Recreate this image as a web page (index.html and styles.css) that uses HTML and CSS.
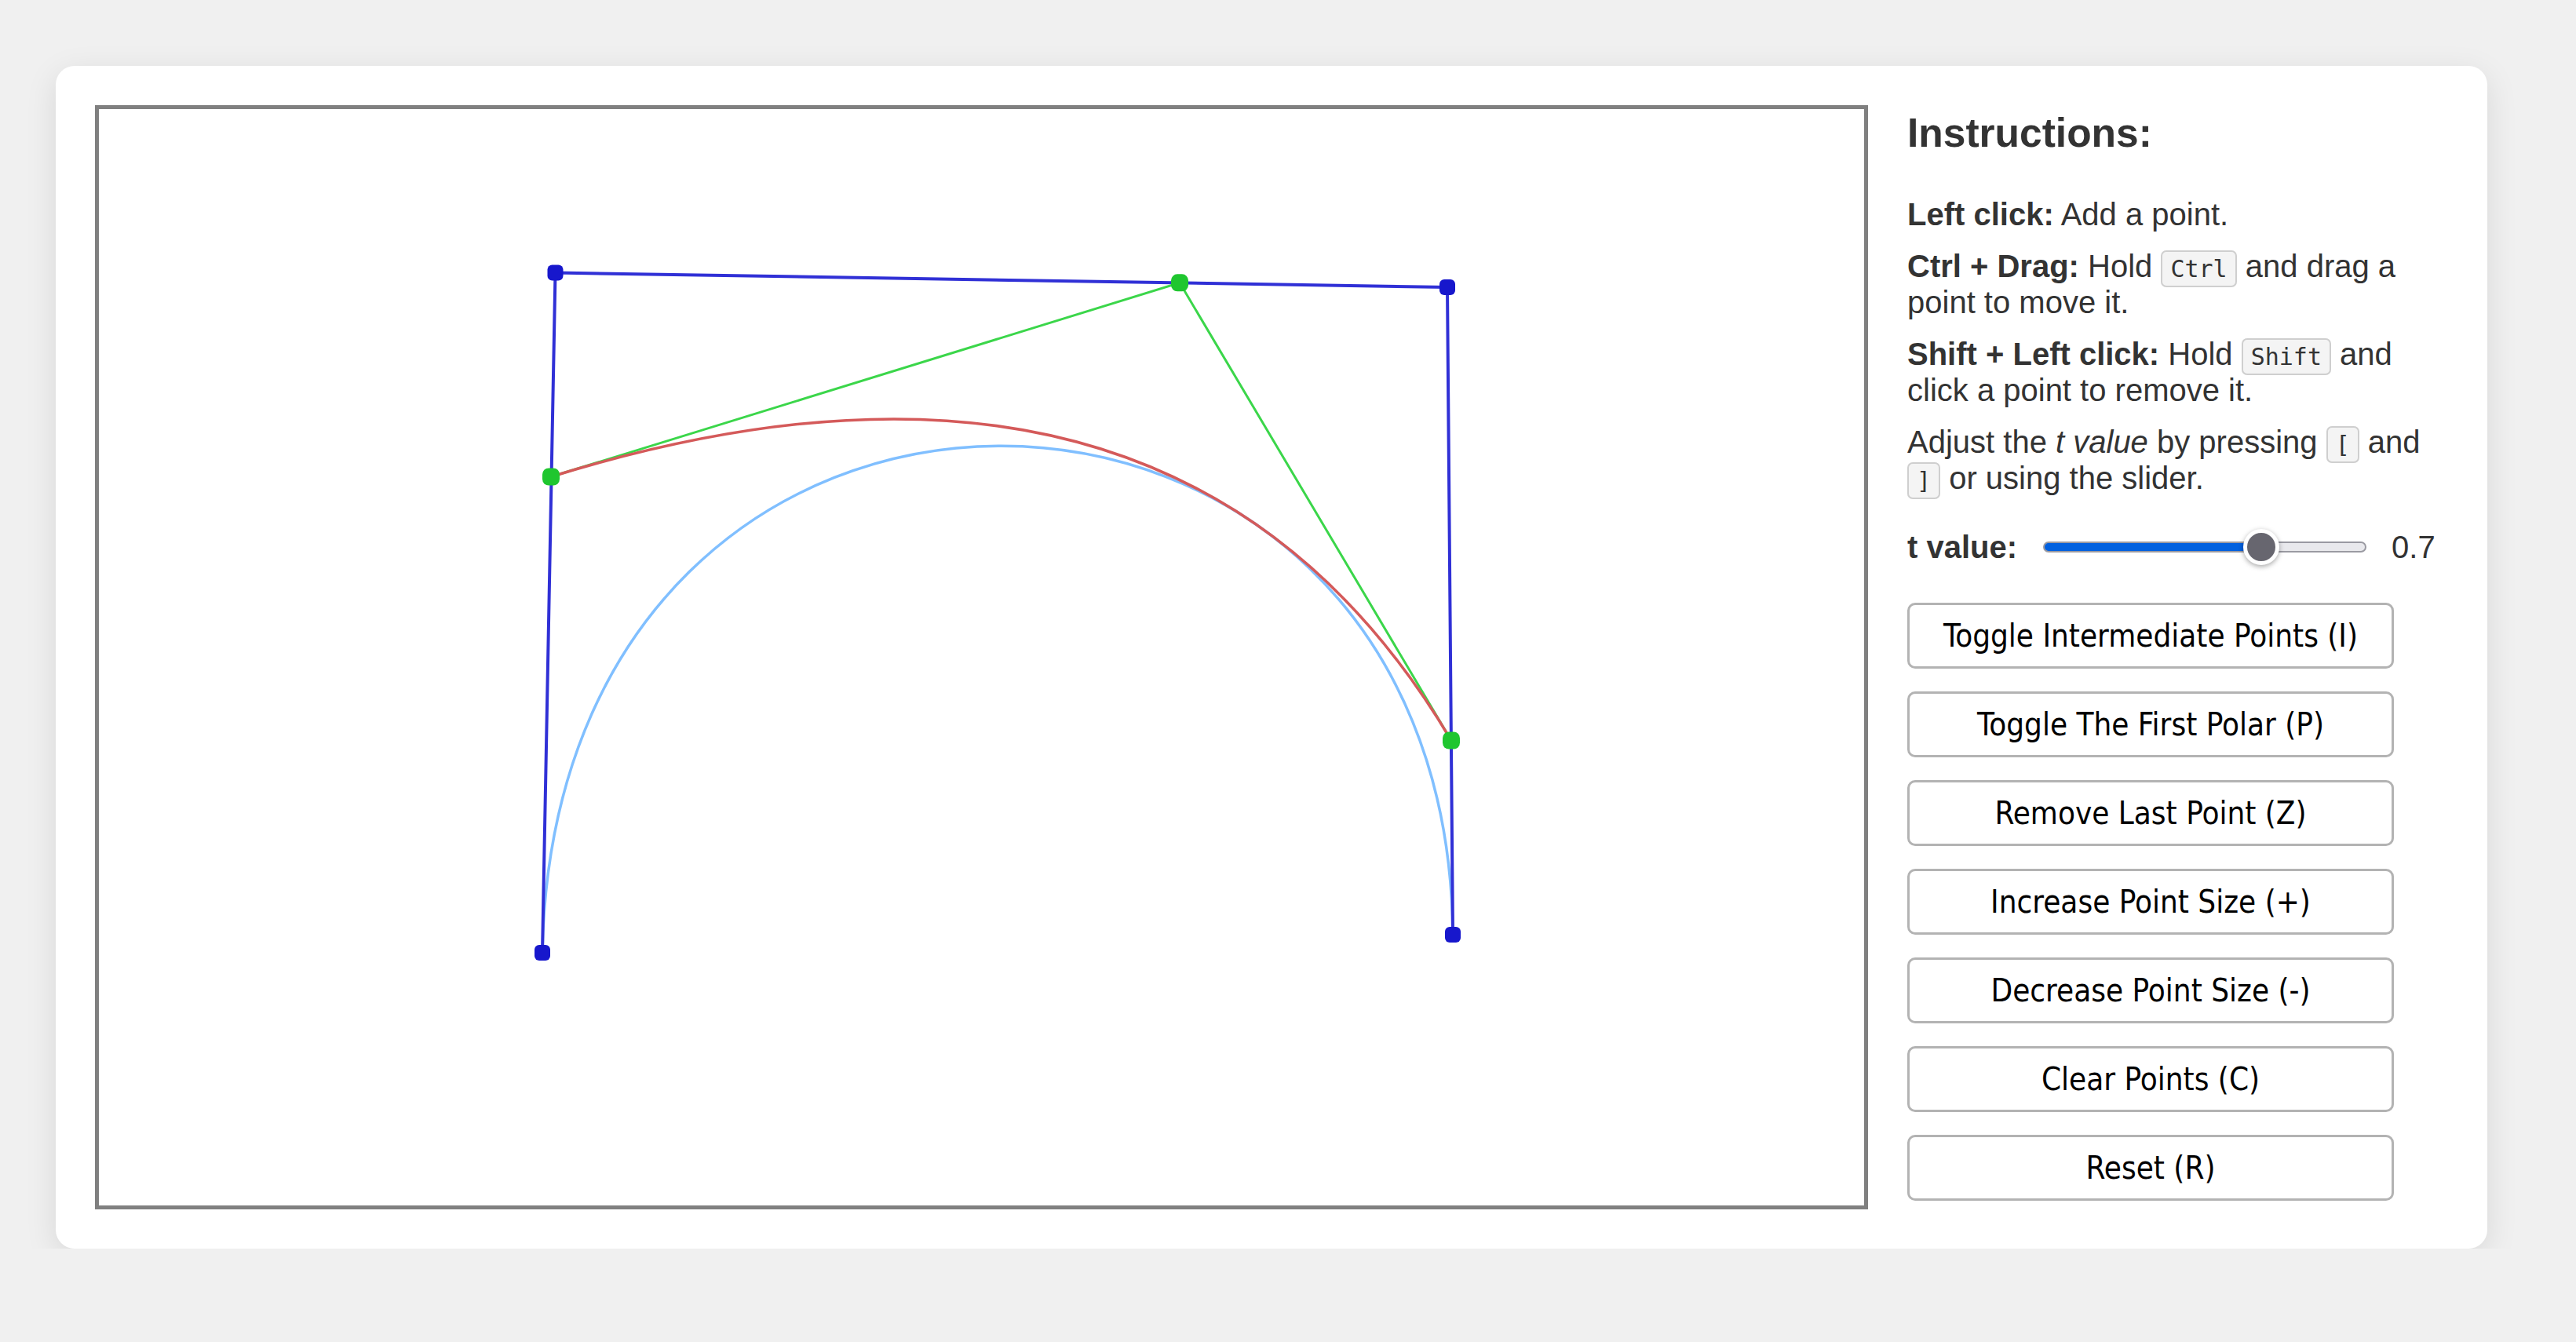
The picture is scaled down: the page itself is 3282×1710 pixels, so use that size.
FILE: index.html
```html
<!DOCTYPE html>
<html lang="en">
<head>
<meta charset="utf-8">
<title>Bézier Curve – First Polar</title>
<link rel="stylesheet" href="styles.css">
</head>
<body>
<div class="page">
  <div class="card">
    <div class="canvas-box">
      <svg class="canvas" viewBox="126 139 2249 1397" width="2249" height="1397" xmlns="http://www.w3.org/2000/svg">
        <path class="curve" d="M691 1214 C707 347.5 1844 366 1851 1191"/>
        <polyline class="poly" points="691,1214 707.5,347.5 1844,366 1851,1191"/>
        <polyline class="polar-poly" points="702,607.5 1503,360.3 1849,943.5"/>
        <path class="polar" d="M702 607.5 Q1503 360.3 1849 943.5"/>
        <rect class="pt" x="681" y="1204" width="20" height="20" rx="6"/>
        <rect class="pt" x="697.5" y="337.5" width="20" height="20" rx="6"/>
        <rect class="pt" x="1834" y="356" width="20" height="20" rx="6"/>
        <rect class="pt" x="1841" y="1181" width="20" height="20" rx="6"/>
        <rect class="gpt" x="691" y="596.5" width="22" height="22" rx="8"/>
        <rect class="gpt" x="1492" y="349.3" width="22" height="22" rx="8"/>
        <rect class="gpt" x="1838" y="932.5" width="22" height="22" rx="8"/>
      </svg>
    </div>
    <aside class="panel">
      <h2 class="title">Instructions:</h2>
      <p class="tip"><b>Left click:</b> Add a point.</p>
      <p class="tip"><b>Ctrl + Drag:</b> Hold <kbd class="key">Ctrl</kbd> and drag a point to move it.</p>
      <p class="tip"><b>Shift + Left click:</b> Hold <kbd class="key">Shift</kbd> and click a point to remove it.</p>
      <p class="tip">Adjust the <i>t value</i> by pressing <kbd class="key">[</kbd> and <kbd class="key">]</kbd> or using the slider.</p>
      <div class="slider-row">
        <label class="slider-label" for="t">t value:</label>
        <input class="slider" id="t" type="range" min="0" max="1" step="0.01" value="0.7" style="--fill:70%">
        <span class="slider-value">0.7</span>
      </div>
      <div class="buttons">
        <button class="btn">Toggle Intermediate Points (I)</button>
        <button class="btn">Toggle The First Polar (P)</button>
        <button class="btn">Remove Last Point (Z)</button>
        <button class="btn">Increase Point Size (+)</button>
        <button class="btn">Decrease Point Size (-)</button>
        <button class="btn">Clear Points (C)</button>
        <button class="btn">Reset (R)</button>
      </div>
    </aside>
  </div>
</div>
</body>
</html>
```

FILE: styles.css
```css
html, body {
  margin: 0;
  padding: 0;
}
body {
  background: #f0f0f0;
  font-family: "Liberation Sans", Arial, sans-serif;
  color: #333;
}
.page {
  padding: 84px 0 0 71px;
}
.card {
  width: 3098px;
  box-sizing: border-box;
  background: #fff;
  border-radius: 24px;
  box-shadow: 0 10px 40px rgba(0, 0, 0, 0.1);
  padding: 50px;
  display: flex;
  gap: 50px;
  align-items: flex-start;
}
.canvas-box {
  flex: none;
  border: 5px solid #808080;
  width: 2249px;
  height: 1397px;
  background: #fff;
}
.canvas {
  display: block;
}
.curve {
  fill: none;
  stroke: #80bfff;
  stroke-width: 3.5;
}
.poly {
  fill: none;
  stroke: #3030d6;
  stroke-width: 4;
  stroke-linejoin: round;
}
.polar-poly {
  fill: none;
  stroke: #3bd64a;
  stroke-width: 3;
}
.polar {
  fill: none;
  stroke: #d45a5a;
  stroke-width: 3.5;
}
.pt {
  fill: #1717cc;
}
.gpt {
  fill: #1fc62f;
}
.panel {
  flex: 1;
  min-width: 0;
  font-size: 40px;
  line-height: 46px;
}
.title {
  font-size: 51.5px;
  line-height: 58px;
  font-weight: bold;
  margin: 6px 0 52px;
}
.tip {
  margin: 0 0 20px;
}
.key {
  font-family: "DejaVu Sans Mono", "Liberation Mono", monospace;
  font-size: 30px;
  line-height: 34px;
  background: #f4f4f4;
  border: 2px solid #cfcfcf;
  border-radius: 7px;
  padding: 4px 10px;
  color: #333;
}
.slider-row {
  display: flex;
  align-items: center;
  margin-top: 42px;
  height: 46px;
}
.slider-label {
  flex: none;
  font-weight: bold;
  white-space: nowrap;
  margin-right: 33px;
}
.slider {
  -webkit-appearance: none;
  appearance: none;
  flex: none;
  width: 412px;
  height: 46px;
  margin: 0 32px 0 0;
  background: transparent;
}
.slider::-webkit-slider-runnable-track {
  height: 14px;
  border-radius: 7px;
  box-sizing: border-box;
  border: 2px solid #9a9aa2;
  background: linear-gradient(to right, #0060df 0, #0060df var(--fill), #e9e9ed var(--fill));
}
.slider::-webkit-slider-thumb {
  -webkit-appearance: none;
  width: 46px;
  height: 46px;
  margin-top: -18px;
  border-radius: 50%;
  background: #67666f;
  border: 5px solid #fff;
  box-sizing: border-box;
  box-shadow: 0 2px 6px rgba(0, 0, 0, 0.35);
}
.slider-value {
  color: #333;
}
.buttons {
  display: flex;
  flex-direction: column;
  gap: 29px;
  margin-top: 48px;
}
.btn {
  width: 620px;
  height: 84px;
  box-sizing: border-box;
  background: #fff;
  border: 3px solid #b3b3b3;
  border-radius: 10px;
  font-family: "DejaVu Sans Condensed", "DejaVu Sans", sans-serif;
  font-size: 40px;
  color: #000;
  padding: 0;
}
```
